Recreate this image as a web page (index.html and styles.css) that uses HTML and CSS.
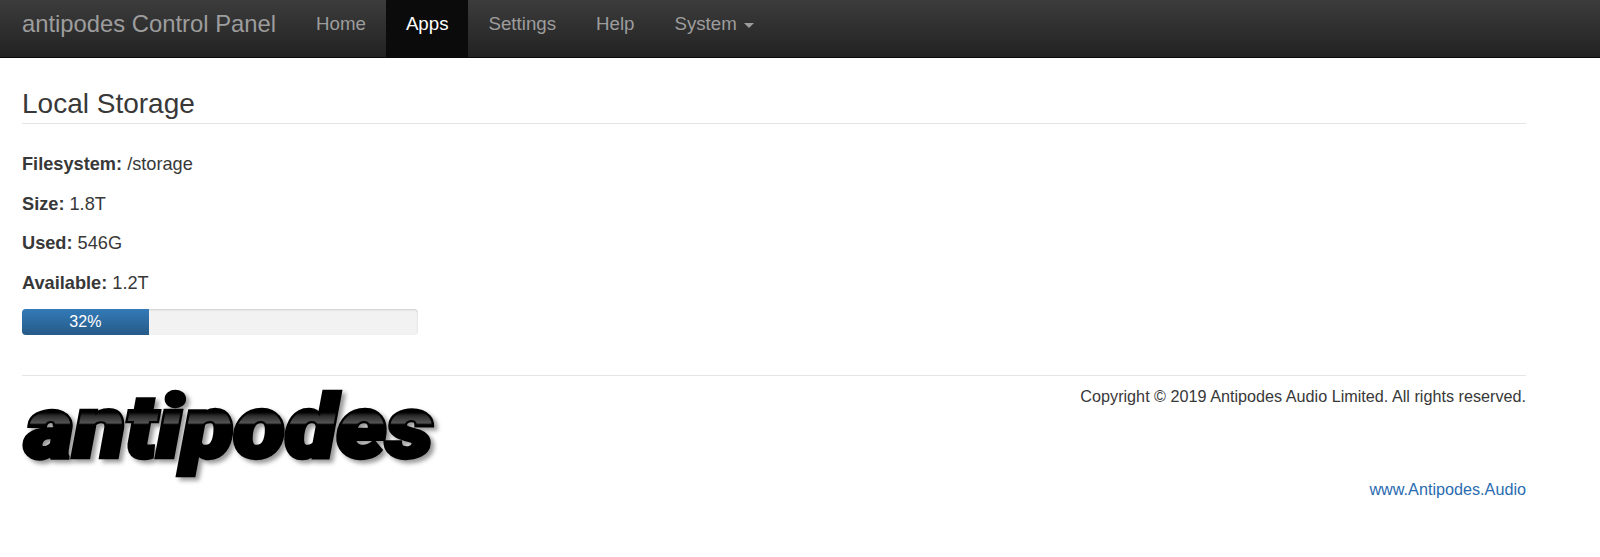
FILE: index.html
```html
<!DOCTYPE html>
<html lang="en">
<head>
  <meta charset="UTF-8" />
  <meta name="viewport" content="width=device-width, initial-scale=1" />
  <title>antipodes Control Panel</title>
  <link rel="stylesheet" href="styles.css">
</head>
<body>
  <nav class="navbar">
    <a class="brand" href="#">antipodes Control Panel</a>
    <ul class="nav">
      <li><a href="#">Home</a></li>
      <li class="active"><a href="#">Apps</a></li>
      <li><a href="#">Settings</a></li>
      <li><a href="#">Help</a></li>
      <li><a href="#">System <span class="caret"></span></a></li>
    </ul>
  </nav>

  <div class="container">
    <h1 class="page-header">Local Storage</h1>
    <p><b>Filesystem:</b> /storage</p>
    <p><b>Size:</b> 1.8T</p>
    <p><b>Used:</b> 546G</p>
    <p><b>Available:</b> 1.2T</p>
    <div class="progress">
      <div class="progress-bar" style="width: 32%">32%</div>
    </div>

    <footer class="footer">
      <div class="logo"><span class="logo-text" data-text="antipodes">antipodes</span></div>
      <div class="footer-info">
        <p>Copyright © 2019 Antipodes Audio Limited. All rights reserved.</p>
        <a href="#">www.Antipodes.Audio</a>
      </div>
    </footer>
  </div>
</body>
</html>
```

FILE: styles.css
```css
* { box-sizing: border-box; }
body {
  margin: 0;
  font-family: "Liberation Sans", Arial, sans-serif;
  font-size: 18.2px;
  line-height: 23px;
  color: #383838;
  background: #fff;
}
a { text-decoration: none; }

.navbar {
  display: flex;
  height: 58px;
  padding-left: 22px;
  background: linear-gradient(to bottom, #3c3c3c, #222);
  border-bottom: 1px solid #080808;
}
.brand {
  font-size: 23.8px;
  line-height: 48px;
  color: #9d9d9d;
  margin-right: 20px;
}
.nav { display: flex; list-style: none; margin: 0; padding: 0; }
.nav a {
  display: block;
  height: 57px;
  padding: 0 20px;
  font-size: 18.7px;
  line-height: 48px;
  color: #9d9d9d;
}
.nav .active a { color: #fff; background: #0b0b0b; }
.caret {
  display: inline-block;
  margin-left: 2px;
  vertical-align: middle;
  border-top: 5px solid #9d9d9d;
  border-left: 5px solid transparent;
  border-right: 5px solid transparent;
}

.container { width: 1548px; padding: 0 22px; }
.page-header {
  margin: 31px 0 29px;
  padding-bottom: 5px;
  font-size: 28px;
  font-weight: 400;
  line-height: 29px;
  border-bottom: 1px solid #e4e4e4;
}
.container > p { margin: 0 0 16.5px; }
.progress {
  width: 396px;
  height: 26px;
  margin-top: -2px;
  background: #f2f2f2;
  border-radius: 4px;
  box-shadow: inset 0 1px 2px rgba(0,0,0,.15);
  overflow: hidden;
}
.progress-bar {
  height: 100%;
  font-size: 16px;
  line-height: 26px;
  text-align: center;
  color: #fff;
  background: linear-gradient(to bottom, #337ab7, #265a88);
}

.footer {
  display: flex;
  justify-content: space-between;
  margin-top: 40px;
  border-top: 1px solid #e6e6e6;
}
.logo { height: 110px; padding-top: 4px; }
.logo-text {
  position: relative;
  display: inline-block;
  margin-left: 3px;
  font-family: Roboto, "Liberation Sans", sans-serif;
  font-size: 80px;
  font-weight: 900;
  font-style: italic;
  line-height: 88px;
  transform: scale(1.18, 1.08);
  transform-origin: left top;
  -webkit-text-stroke: 4px #000;
  color: #000;
  filter: drop-shadow(3px 3px 2px rgba(0,0,0,.4));
}
/* grey band across the tops of the letters */
.logo-text::after {
  content: attr(data-text);
  position: absolute;
  left: 0;
  top: 0;
  -webkit-text-stroke: 0;
  color: transparent;
  background: linear-gradient(to bottom, #000 30px, #2c2c2c 33px, #555 40px, #000 41px);
  -webkit-background-clip: text;
  background-clip: text;
}
.footer-info { text-align: right; font-size: 16.2px; }
.footer-info p { margin: 9px 0 0; }
.footer-info a { display: block; margin-top: 70px; color: #2a6cb0; }
```
